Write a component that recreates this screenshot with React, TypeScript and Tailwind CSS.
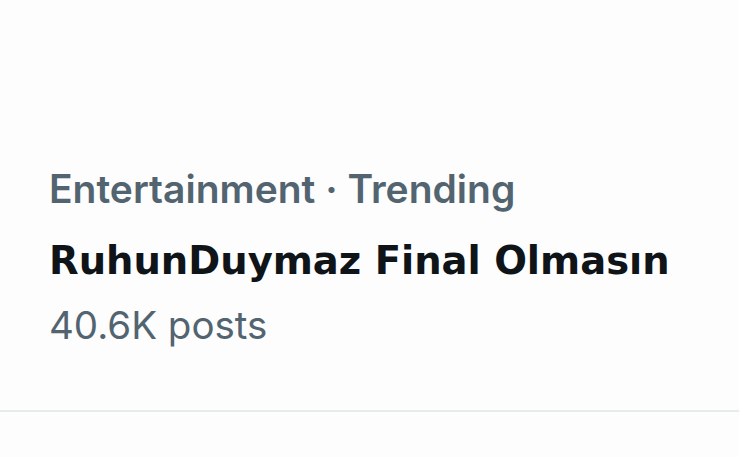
export default function App() {
  return (
    <div className="flex h-[457px] w-[739px] flex-col bg-[#fdfdfd]">
      {/* trend row */}
      <div className="flex h-[410px] flex-col whitespace-nowrap pl-[49px] pt-[165px]">
        <span className="font-['Inter',sans-serif] text-[39px] font-semibold leading-[48px] text-[#536471]">
          Entertainment · Trending
        </span>
        <span className="mt-[24px] font-['DejaVu_Sans',sans-serif] text-[38.5px] font-bold leading-[48px] text-[#0f1419]">
          RuhunDuymaz Final Olmasın
        </span>
        <span className="mt-[16px] font-['Inter',sans-serif] text-[38.5px] font-normal leading-[48px] text-[#536471]">
          40.6K posts
        </span>
      </div>
      <div className="h-[2px] w-full bg-[#e6ecec]" />
    </div>
  );
}
